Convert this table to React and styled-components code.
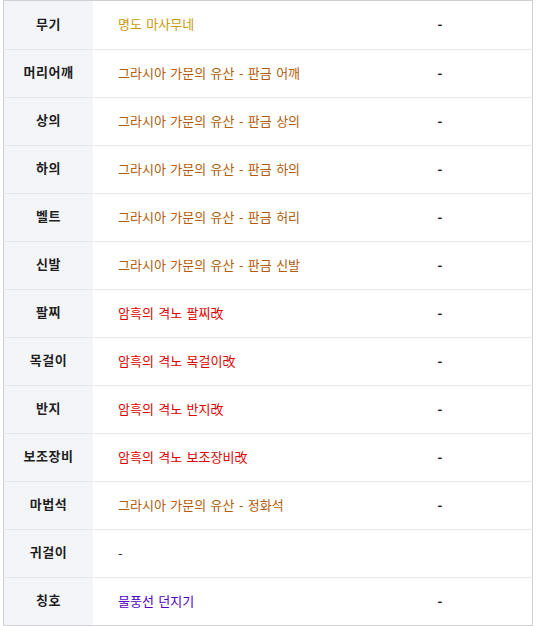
import React from 'react';
import styled, { createGlobalStyle } from 'styled-components';

const GlobalStyle = createGlobalStyle`
  body {
    margin: 0;
    background: #fff;
    font-family: "Noto Sans CJK KR", "Noto Sans", sans-serif;
  }
`;

const Wrapper = styled.div`
  padding: 0 3px;
`;

const EquipTable = styled.table`
  width: 530px;
  border: 1px solid #cfd0d4;
  border-collapse: collapse;
  table-layout: fixed;
  font-size: 13px;
`;

const Row = styled.tr`
  height: 48px;
  border-top: 1px solid #e8e8ea;
  &:first-child {
    height: 49px;
    border-top: 0;
  }
`;

const LabelCell = styled.th`
  width: 89px;
  background: #f4f5f9;
  color: #1e1e22;
  font-weight: 700;
  letter-spacing: 0.5px;
  text-align: center;
  padding: 0 0 4px;
`;

const ValueCell = styled.td`
  padding: 0 0 3px 25px;
  color: ${({ $color }) => $color};
  word-spacing: 1.5px;
`;

const ExtraCell = styled.td`
  width: 184px;
  text-align: center;
  color: #111;
  font-weight: 700;
  padding: 0 0 3px;
`;

const colors = {
  gold: '#c99a0b',
  grasia: '#b45c0a',
  dark: '#de0000',
  title: '#5200c6',
  none: '#222',
};

const items = [
  { slot: '무기', name: '명도 마사무네', tone: 'gold', extra: '-' },
  { slot: '머리어깨', name: '그라시아 가문의 유산 - 판금 어깨', tone: 'grasia', extra: '-' },
  { slot: '상의', name: '그라시아 가문의 유산 - 판금 상의', tone: 'grasia', extra: '-' },
  { slot: '하의', name: '그라시아 가문의 유산 - 판금 하의', tone: 'grasia', extra: '-' },
  { slot: '벨트', name: '그라시아 가문의 유산 - 판금 허리', tone: 'grasia', extra: '-' },
  { slot: '신발', name: '그라시아 가문의 유산 - 판금 신발', tone: 'grasia', extra: '-' },
  { slot: '팔찌', name: '암흑의 격노 팔찌改', tone: 'dark', extra: '-' },
  { slot: '목걸이', name: '암흑의 격노 목걸이改', tone: 'dark', extra: '-' },
  { slot: '반지', name: '암흑의 격노 반지改', tone: 'dark', extra: '-' },
  { slot: '보조장비', name: '암흑의 격노 보조장비改', tone: 'dark', extra: '-' },
  { slot: '마법석', name: '그라시아 가문의 유산 - 정화석', tone: 'grasia', extra: '-' },
  { slot: '귀걸이', name: '-', tone: 'none', extra: '' },
  { slot: '칭호', name: '물풍선 던지기', tone: 'title', extra: '-' },
];

const App = () => (
  <Wrapper>
    <GlobalStyle />
    <EquipTable>
      <tbody>
        {items.map(({ slot, name, tone, extra }) => (
          <Row key={slot}>
            <LabelCell>{slot}</LabelCell>
            <ValueCell $color={colors[tone]}>{name}</ValueCell>
            <ExtraCell>{extra}</ExtraCell>
          </Row>
        ))}
      </tbody>
    </EquipTable>
  </Wrapper>
);

export default App;
